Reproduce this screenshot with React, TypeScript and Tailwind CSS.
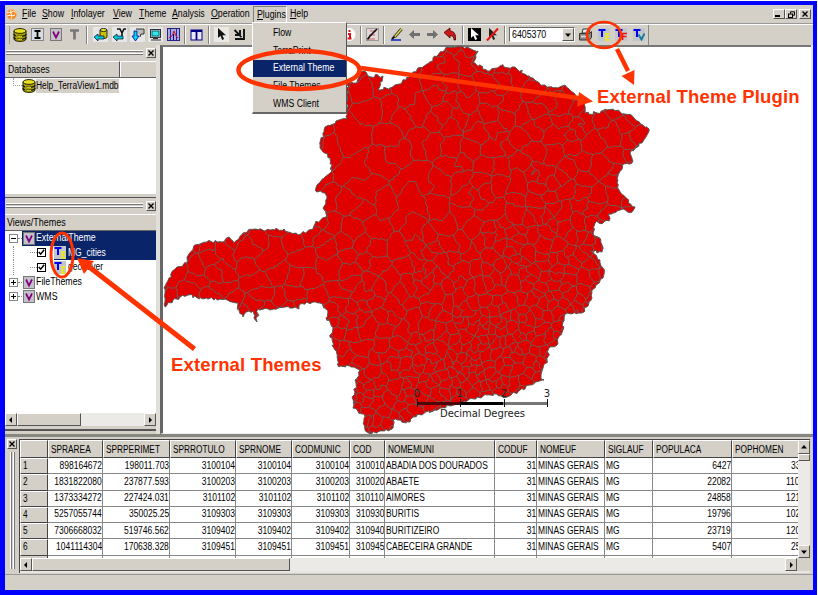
import React from "react";

type Pt = [number, number];

function makeRandom(seed: number) {
  let s = seed;
  return () => {
    s = (s * 1664525 + 1013904223) >>> 0;
    return s / 4294967296;
  };
}

const OUTLINE: Pt[] = [
  [165, 307], [164, 288], [169, 278], [177, 267], [187, 263], [187, 257], [195, 245], [208, 241], [222, 242], [229, 237],
  [234, 243], [243, 233], [255, 229], [270, 230], [284, 229], [298, 235], [310, 230], [315, 224], [326, 217], [323, 208],
  [327, 198], [325, 193], [317, 192], [317, 185], [332, 171], [330, 158], [320, 148], [325, 127], [336, 121], [347, 119],
  [347, 80], [357, 83], [360, 72], [366, 72], [368, 76], [383, 76], [378, 90], [390, 88], [400, 84], [413, 72], [429, 63], [433, 58],
  [448, 47], [460, 46], [478, 51], [473, 63], [490, 71], [500, 66], [515, 67], [527, 76], [545, 85], [558, 88],
  [565, 85], [578, 97], [584, 103], [585, 113], [597, 113], [605, 109], [620, 112], [633, 117], [649, 129], [642, 143],
  [630, 153], [632, 163], [622, 165], [618, 180], [619, 190], [635, 207], [632, 212], [620, 210], [608, 214], [609, 221],
  [595, 223], [593, 233], [598, 237], [602, 245], [602, 252], [590, 251], [600, 260], [603, 268], [603, 278], [592, 290],
  [592, 298], [582, 313], [567, 313], [563, 322], [563, 330], [557, 345], [550, 347], [547, 360], [543, 368], [541, 377],
  [544, 380], [530, 385], [507, 397], [497, 394], [477, 397], [457, 403], [435, 410], [413, 417], [410, 422], [393, 420],
  [393, 428], [377, 433], [367, 432], [363, 423], [365, 417], [353, 408], [352, 397], [355, 392], [355, 380], [360, 370],
  [350, 366], [339, 367], [335, 350], [330, 337], [333, 327], [326, 318], [328, 312], [320, 303], [313, 302], [300, 304],
  [299, 309], [293, 308], [285, 307], [270, 310], [258, 309], [257, 322], [254, 318], [253, 311], [249, 311], [243, 317],
  [239, 310], [238, 303], [225, 299], [203, 299], [188, 295], [180, 297],
];

// Distance between neighbouring municipalities: sparse in the northwest, dense in the southeast.
const SPACING: [number, number, number][] = [
  [190, 275, 19], [250, 260, 21], [300, 270, 19], [350, 140, 27], [350, 180, 27], [390, 185, 36], [440, 90, 19], [400, 120, 24], [425, 170, 25],
  [480, 140, 16], [550, 130, 15], [610, 140, 15], [580, 190, 15], [500, 210, 14], [370, 260, 17], [440, 260, 12],
  [520, 270, 8.5], [580, 270, 9.5], [540, 320, 7.6], [480, 330, 8], [420, 330, 11], [370, 320, 13], [390, 380, 9], [500, 370, 8.5], [370, 420, 8],
];

function spacing(x: number, y: number) {
  let a = 0;
  let b = 0;
  for (const [px, py, r] of SPACING) {
    const w = 1 / (((x - px) ** 2 + (y - py) ** 2 + 60) ** 1.5);
    a += w * r;
    b += w;
  }
  return a / b;
}

function rough(a: Pt, b: Pt, rnd: () => number, step: number, amp: number): Pt[] {
  const len = Math.hypot(b[0] - a[0], b[1] - a[1]);
  const n = Math.max(1, Math.round(len / step));
  const out: Pt[] = [];
  for (let i = 1; i < n; i++) {
    const t = i / n;
    out.push([a[0] + (b[0] - a[0]) * t + (rnd() - 0.5) * amp, a[1] + (b[1] - a[1]) * t + (rnd() - 0.5) * amp]);
  }
  out.push(b);
  return out;
}

const toPath = (pts: Pt[]) => pts.map((p) => p[0].toFixed(1) + " " + p[1].toFixed(1)).join("L");

type Site = { x: number; y: number; r: number; group: number };

function buildMap() {
  const rnd = makeRandom(77);
  const border: Pt[] = [OUTLINE[0]];
  OUTLINE.forEach((p, i) => border.push(...rough(p, OUTLINE[(i + 1) % OUTLINE.length], rnd, 2.5, 3)));
  const centres: [number, number, number][] = [];
  for (let k = 0; k < 14000; k++) {
    const x = 155 + rnd() * 505;
    const y = 38 + rnd() * 405;
    const r = spacing(x, y) * (0.55 + rnd() * 0.8);
    if (centres.every((s) => (s[0] - x) ** 2 + (s[1] - y) ** 2 > ((r + s[2]) / 2) ** 2)) centres.push([x, y, r]);
  }
  // Each municipality is a small cluster of cells, so that its shape is not convex.
  const sites: Site[] = [];
  centres.forEach(([x, y, r], group) => {
    sites.push({ x, y, r, group });
    for (let i = 0; i < 4; i++) {
      const a = rnd() * Math.PI * 2;
      const d = r * (0.25 + rnd() * 0.35);
      sites.push({ x: x + Math.cos(a) * d, y: y + Math.sin(a) * d, r, group });
    }
  });
  let cells = "";
  sites.forEach((s) => {
    const h = s.r * 1.4 + 6;
    type V = { p: Pt; g: number };
    let poly: V[] = [
      { p: [s.x - h, s.y - h], g: s.group },
      { p: [s.x + h, s.y - h], g: s.group },
      { p: [s.x + h, s.y + h], g: s.group },
      { p: [s.x - h, s.y + h], g: s.group },
    ];
    for (const o of sites) {
      const dx = o.x - s.x;
      const dy = o.y - s.y;
      if (o === s || dx * dx + dy * dy > h * h * 5) continue;
      const c = (o.x ** 2 + o.y ** 2 - s.x ** 2 - s.y ** 2) / 2;
      const next: V[] = [];
      for (let i = 0; i < poly.length; i++) {
        const a = poly[i];
        const b = poly[(i + 1) % poly.length];
        const da = a.p[0] * dx + a.p[1] * dy - c;
        const db = b.p[0] * dx + b.p[1] * dy - c;
        if (da <= 0) next.push(a);
        if (da * db < 0) {
          const t = da / (da - db);
          const m: Pt = [a.p[0] + (b.p[0] - a.p[0]) * t, a.p[1] + (b.p[1] - a.p[1]) * t];
          next.push({ p: m, g: da < 0 ? o.group : a.g });
        }
      }
      poly = next;
    }
    poly.forEach((v, i) => {
      if (v.g <= s.group) return;
      const q = poly[(i + 1) % poly.length].p;
      cells += "M" + toPath([v.p, ...rough(v.p, q, rnd, 2.5, 2)]);
    });
  });
  return { border: "M" + toPath(border) + "Z", cells };
}

const MAP = buildMap();

function Txt({ children, s = "scale-x-[.83]", o = "origin-left" }: { children: React.ReactNode; s?: string; o?: string }) {
  return <span className={"inline-block whitespace-pre " + o + " " + s}>{children}</span>;
}

const raised = "border border-t-white border-l-white border-r-[#555] border-b-[#555] bg-[#d4d0c8]";

function DbIcon() {
  return (
    <svg width="14" height="14" viewBox="0 0 14 14" className="shrink-0">
      <path d="M1 3v8c0 3.2 12 3.2 12 0V3z" fill="#a8a000" stroke="#222200" />
      <ellipse cx="7" cy="3" rx="6" ry="2.4" fill="#e8e020" stroke="#222200" />
      <path d="M1 6c0 3 12 3 12 0M1 9c0 3 12 3 12 0" fill="none" stroke="#111" strokeWidth="1.2" />
      <path d="M3 7.7c1.5.9 4 1 6 .8M3 10.7c1.5.9 4 1 6 .8" fill="none" stroke="#f4ee30" strokeWidth=".9" />
    </svg>
  );
}

function VIcon() {
  return (
    <svg width="12" height="13" viewBox="0 0 12 13" className="shrink-0">
      <rect x=".5" y=".5" width="11" height="12" fill="#c4c0c8" stroke="#777" />
      <path d="M3 3.5l3 6 3-6" fill="none" stroke="#800080" strokeWidth="1.7" />
    </svg>
  );
}

function TIcon({ kind }: { kind: "E" | "F" | "V" }) {
  return (
    <svg width="12" height="13" viewBox="0 0 12 13" className="shrink-0">
      <rect width="12" height="13" fill="#c3c5cc" />
      <path d="M.5 2h7M4 2v7" fill="none" stroke="#0000f0" strokeWidth="2" />
      {kind === "E" && <path d="M11.5 6H8v6h3.5M8 9h3" fill="none" stroke="#f2ee00" strokeWidth="1.4" />}
      {kind === "F" && <path d="M12 5.5H7.5V12M7.5 8.5h4" fill="none" stroke="#ee1111" strokeWidth="1.7" />}
      {kind === "V" && <path d="M5.5 6.5l3 5 3-6" fill="none" stroke="#167aa0" strokeWidth="1.9" />}
    </svg>
  );
}

const pointer = "M4 1v10l2.4-2.2L8.2 13l1.9-.9-1.8-3.8H12z";

function Glyph({ name }: { name: string }) {
  switch (name) {
    case "db":
      return <DbIcon />;
    case "V":
      return <VIcon />;
    case "E":
    case "F":
    case "W":
      return <TIcon kind={name === "W" ? "V" : (name as "E" | "F")} />;
  }
  return (
    <svg width="15" height="15" viewBox="0 0 15 15" className="shrink-0">
      {name === "I" && (
        <>
          <rect x="1.5" y="1.5" width="12" height="12" fill="#d8dce4" stroke="#888" />
          <path d="M4.5 4h6M4.5 11h6M7.5 4v7" stroke="#000" strokeWidth="1.8" />
        </>
      )}
      {name === "T" && <path d="M3 3.5h9M7.5 3v9.500" stroke="#777" strokeWidth="2.7" />}
      {name === "dbarrow" && (
        <>
          <rect width="15" height="15" fill="#e6e6e8" />
          <path d="M7 3v7c0 2 7 2 7 0V3z" fill="#c8c000" stroke="#222" />
          <ellipse cx="10.5" cy="3" rx="3.5" ry="1.5" fill="#f4ee30" stroke="#222" />
          <path d="M1 10l4-3v2h6v3H5v2z" fill="#00c8d8" stroke="#123" strokeWidth=".8" />
        </>
      )}
      {name === "varrow" && (
        <>
          <rect width="15" height="15" fill="#e6e6e8" />
          <path d="M5 2h3l2 4 2-4h2M10 6v4" fill="none" stroke="#111" strokeWidth="1.6" />
          <path d="M1 10l4-3v2h6v3H5v2z" fill="#00c8d8" stroke="#123" strokeWidth=".8" />
        </>
      )}
      {name === "down" && (
        <>
          <rect width="15" height="15" fill="#e6e6e8" />
          <path d="M6 2h8v5h-3l-1 3" fill="#bbb" stroke="#333" />
          <path d="M4 4h3v5h2l-3.5 5L2 9h2z" fill="#00d8e8" stroke="#0000a0" strokeWidth=".8" />
        </>
      )}
      {name === "screen" && (
        <>
          <rect width="15" height="15" fill="#e6e6e8" />
          <rect x="2.5" y="2.5" width="10" height="8" fill="#d8d8d8" stroke="#333" />
          <rect x="4" y="4" width="7" height="5" fill="#30e8e8" stroke="#067" />
          <path d="M3 13h10M5 11.5h5" stroke="#333" />
        </>
      )}
      {name === "chart" && (
        <>
          <rect x="1.5" y="1.5" width="12" height="12" fill="#a8aadc" stroke="#222288" />
          <path d="M4.5 2v11M10.5 2v11" stroke="#2222c0" />
          <path d="M3 11l3-2 2-5 2 5 2 2" fill="none" stroke="#d01020" />
          <path d="M7.5 7v6" stroke="#0000a0" />
        </>
      )}
      {name === "table" && (
        <>
          <rect x="2" y="3" width="11" height="10" fill="#e8e8f8" stroke="#000080" />
          <path d="M2 4h11M7.5 4v9" stroke="#000080" strokeWidth="1.8" />
        </>
      )}
      {name === "pointer" && (
        <>
          <rect width="15" height="15" fill="#e9e8e5" />
          <path d={pointer} fill="#111" />
        </>
      )}
      {name === "se" && <path d="M2.5 3l7 7M12 2v10H3M8 3v5H3" fill="none" stroke="#111" strokeWidth="1.9" />}
      {name === "info" && (
        <>
          <circle cx="6" cy="7.5" r="6.5" fill="#fff" />
          <path d="M6.5 3v2M5 7h2v4.500M4.500 11.500h4" stroke="#e01010" strokeWidth="2" fill="none" />
        </>
      )}
      {name === "page" && (
        <>
          <rect x="1.5" y="1.5" width="12" height="12" fill="#e0d8d8" stroke="#999" />
          <path d="M5 4h6M4 8h6M4 12h6" stroke="#d06060" />
          <path d="M12 2L5 9l-2.500 3.500" stroke="#111" strokeWidth="1.7" fill="none" />
        </>
      )}
      {name === "pencil" && (
        <>
          <path d="M2 13h10" stroke="#1030c0" strokeWidth="1.6" />
          <path d="M12.5 2L5.5 10" stroke="#333" strokeWidth="3.2" />
          <path d="M12.5 2L5.5 10" stroke="#e8e040" strokeWidth="1.4" />
          <path d="M5.5 9.5L3 12" stroke="#111" strokeWidth="2" />
        </>
      )}
      {name === "left" && <path d="M2 7.5l5-4.500v3h6v3H7v3z" fill="#707070" />}
      {name === "right" && <path d="M13 7.5L8 3v3H2v3h6v3z" fill="#707070" />}
      {name === "undo" && <path d="M1 5.5L7 1v3c4 0 6 3 5.500 9L11 13c0-3-1-4.500-4-4.500V11z" fill="#d01818" stroke="#400" strokeWidth=".8" />}
      {name === "black" && (
        <>
          <rect x="1" y="1" width="13" height="13" fill="#000" />
          <path d={pointer} fill="#fff" />
        </>
      )}
      {name === "nopointer" && (
        <>
          <path d={pointer} fill="#222" />
          <path d="M2 13.5L13 1.5" stroke="#f01010" strokeWidth="2" />
        </>
      )}
      {name === "printer" && (
        <>
          <path d="M4 6l1-4h7l-1 4z" fill="#eee" stroke="#333" />
          <path d="M1.5 6.5h10l2-2v6l-2 2.500h-10z" fill="#888" stroke="#333" />
          <path d="M3 9.5h7" stroke="#ddd" strokeWidth="1.5" />
        </>
      )}
    </svg>
  );
}

const TOOLS: [string, string][] = [
  ["db", "w-[18px]"], ["I", "w-[17px]"], ["V", "w-[19px]"], ["T", "w-[18px]"], ["|", "w-[8px]"],
  ["dbarrow", "w-[18px]"], ["varrow", "w-[20px]"], ["down", "w-[17px]"], ["screen", "w-[18px]"], ["chart", "w-[18px]"], ["|", "w-[5px]"],
  ["table", "w-[18px]"], ["|", "w-[7px]"], ["pointer", "w-[18px]"], ["se", "w-[18px]"], ["", "w-[93px]"],
  ["info", "w-[18px]"], ["|", "w-[4px]"], ["page", "w-[18px]"], ["|", "w-[6px]"], ["pencil", "w-[18px]"], ["left", "w-[19px]"],
  ["right", "w-[17px]"], ["undo", "w-[19px]"], ["|", "w-[5px]"], ["black", "w-[18px]"], ["nopointer", "w-[18px]"], ["|", "w-[8px]"],
];

function Tool({ name, w }: { name: string; w: string }) {
  return (
    <div className={"flex h-[18px] shrink-0 items-center justify-center " + w}>
      {name === "|" ? <div className="h-[18px] w-[2px] border-l border-r border-l-[#808080] border-r-white" /> : name && <Glyph name={name} />}
    </div>
  );
}

function Arrow({ dir }: { dir: "l" | "r" | "u" | "d" }) {
  const d = { l: "M5 1v6L2 4z", r: "M3 1v6l3-3z", u: "M1 5.5h6L4 2z", d: "M1 2.5h6L4 6z" }[dir];
  return (
    <svg width="8" height="8" viewBox="0 0 8 8">
      <path d={d} fill="#000" />
    </svg>
  );
}

function Cross() {
  return (
    <svg width="6" height="6" viewBox="0 0 6 6">
      <path d="M.5.5l5 5M5.5.5l-5 5" stroke="#000" strokeWidth="1.4" />
    </svg>
  );
}

function Handle({ h }: { h: string }) {
  return (
    <div className={"flex shrink-0 items-center pl-px " + h}>
      <div className="flex flex-1 flex-col gap-px">
        <div className="h-[2px] border-t border-b border-t-white border-b-[#777]" />
        <div className="h-[2px] border-t border-b border-t-white border-b-[#777]" />
      </div>
      <div className={"ml-[3px] flex h-[10px] w-[10px] items-center justify-center " + raised}>
        <Cross />
      </div>
    </div>
  );
}

const MENUS: [string, string, string][] = [
  ["F", "ile", "w-[20px]"], ["S", "how", "w-[29px]"], ["I", "nfolayer", "w-[42px]"], ["V", "iew", "w-[26px]"], ["T", "heme", "w-[33px]"],
  ["A", "nalysis", "w-[39px]"], ["O", "peration", "w-[45px]"], ["P", "lugins", "w-[34px]"], ["H", "elp", "w-[20px]"],
];

const COLS: { name: string; w: string; right: boolean }[] = [
  { name: "SPRAREA", w: "w-[55px]", right: true },
  { name: "SPRPERIMET", w: "w-[67px]", right: true },
  { name: "SPRROTULO", w: "w-[66px]", right: true },
  { name: "SPRNOME", w: "w-[56px]", right: true },
  { name: "CODMUNIC", w: "w-[58px]", right: true },
  { name: "COD", w: "w-[35px]", right: true },
  { name: "NOMEMUNI", w: "w-[110px]", right: false },
  { name: "CODUF", w: "w-[42px]", right: true },
  { name: "NOMEUF", w: "w-[68px]", right: false },
  { name: "SIGLAUF", w: "w-[48px]", right: false },
  { name: "POPULACA", w: "w-[79px]", right: true },
];

const ROWS = [
  ["898164672", "198011.703", "3100104", "3100104", "3100104", "310010", "ABADIA DOS DOURADOS", "31", "MINAS GERAIS", "MG", "6427", "33"],
  ["1831822080", "237877.593", "3100203", "3100203", "3100203", "310020", "ABAETE", "31", "MINAS GERAIS", "MG", "22082", "110"],
  ["1373334272", "227424.031", "3101102", "3101102", "3101102", "310110", "AIMORES", "31", "MINAS GERAIS", "MG", "24858", "121"],
  ["5257055744", "350025.25", "3109303", "3109303", "3109303", "310930", "BURITIS", "31", "MINAS GERAIS", "MG", "19796", "102"],
  ["7306668032", "519746.562", "3109402", "3109402", "3109402", "310940", "BURITIZEIRO", "31", "MINAS GERAIS", "MG", "23719", "120"],
  ["1041114304", "170638.328", "3109451", "3109451", "3109451", "310945", "CABECEIRA GRANDE", "31", "MINAS GERAIS", "MG", "5407", "25"],
];

const headCell = "h-full shrink-0 border-r border-b border-r-[#444] border-b-[#444] border-t border-t-white border-l border-l-white bg-[#d4d0c8] flex items-center overflow-hidden";
const cell = "h-full shrink-0 border-r border-b border-[#888] flex items-center overflow-hidden";

function Table() {
  return (
    <div className="flex h-[134px] w-[791px] flex-col border-l border-t border-[#444] bg-white">
      <div className="flex h-[118px]">
        <div className="w-[778px] overflow-hidden">
          <div className="flex h-[18px] w-[860px]">
            <div className={headCell + " w-[28px]"} />
            {COLS.map((c) => (
              <div key={c.name} className={headCell + " pl-[2px] pt-px " + c.w}>
                <Txt>{c.name}</Txt>
              </div>
            ))}
            <div className={headCell + " w-[80px] pl-[2px] pt-px"}>
              <Txt>POPHOMEN</Txt>
            </div>
          </div>
          {ROWS.map((r, i) => (
            <div key={i} className="flex h-[16.25px] w-[860px]">
              <div className={headCell + " w-[28px] pl-[2px]"}>
                <Txt>{i + 1}</Txt>
              </div>
              {COLS.map((c, j) => (
                <div key={c.name} className={cell + " " + c.w + (c.right ? " justify-end" : " pl-px")}>
                  <Txt s={c.right ? "scale-x-[.85]" : "scale-x-[.84]"} o={c.right ? "origin-right" : "origin-left"}>{r[j]}</Txt>
                </div>
              ))}
              <div className={cell + " w-[80px]" + (r[11].length === 3 ? " pl-[54px]" : " pl-[59px]")}>
                <Txt s="scale-x-[.85]">{r[11]}</Txt>
              </div>
            </div>
          ))}
          <div className="flex h-[4px]">
            <div className="w-[28px] shrink-0 border-r border-[#444] bg-[#d4d0c8]" />
            {COLS.map((c) => (
              <div key={c.name} className={"shrink-0 border-r border-[#888] " + c.w} />
            ))}
          </div>
        </div>
        <div className="flex w-[12px] flex-col bg-[#ebeae7]">
          <div className={"flex h-[14px] items-center justify-center " + raised}><Arrow dir="u" /></div>
          <div className={"h-[7px] " + raised} />
          <div className="flex-1" />
          <div className={"flex h-[13px] items-center justify-center " + raised}><Arrow dir="d" /></div>
        </div>
      </div>
      <div className="flex h-[13px] bg-[#ebeae7]">
        <div className={"flex w-[12px] items-center justify-center " + raised}><Arrow dir="l" /></div>
        <div className={"w-[258px] " + raised} />
        <div className="flex-1" />
        <div className={"flex w-[12px] items-center justify-center " + raised}><Arrow dir="r" /></div>
        <div className="w-[13px] bg-[#d4d0c8]" />
      </div>
      <div className="h-[2px] bg-[#e8e6e0]" />
    </div>
  );
}

function Check() {
  return (
    <div className="flex h-[9px] w-[9px] shrink-0 items-center justify-center border border-black bg-white">
      <svg width="7" height="7" viewBox="0 0 7 7">
        <path d="M.8 3l1.9 2.200L6.200.8" fill="none" stroke="#000" strokeWidth="1.5" />
      </svg>
    </div>
  );
}

function Plus({ open }: { open?: boolean }) {
  return (
    <svg width="9" height="9" viewBox="0 0 9 9" className="shrink-0">
      <rect x=".5" y=".5" width="8" height="8" fill="#fff" stroke="#888" />
      <path d={open ? "M2 4.5h5" : "M2 4.5h5M4.5 2v5"} stroke="#000" />
    </svg>
  );
}

function ViewRow({ name, open, dark }: { name: string; open?: boolean; dark?: boolean }) {
  return (
    <div className="flex h-[14.6px] shrink-0 items-center">
      <div className="flex w-[17px] items-center pl-[4px]">
        <Plus open={open} />
        <div className="w-[4px] border-t border-dotted border-[#888]" />
      </div>
      <div className={"flex h-full flex-1 items-center gap-px pl-px " + (dark ? "bg-[#0a246a] text-white" : "")}>
        <VIcon />
        <Txt s="scale-x-[.88]">{name}</Txt>
      </div>
    </div>
  );
}

function ThemeRow({ name, dark }: { name: string; dark?: boolean }) {
  return (
    <div className="flex h-[14.6px] shrink-0 items-center">
      <div className="ml-[8px] h-full w-[9px] border-l border-dotted border-[#888]" />
      <div className={"flex h-full flex-1 items-center " + (dark ? "bg-[#0a246a] text-white" : "")}>
        <div className="flex h-full w-[32px] items-center bg-white pl-[8px]">
          <div className="w-[7px] border-t border-dotted border-[#888]" />
          <Check />
        </div>
        <TIcon kind="E" />
        <div className="pl-[2px]"><Txt s="scale-x-[.85]">{name}</Txt></div>
      </div>
    </div>
  );
}

export default function App() {
  return (
    <div className="relative h-[595px] w-[818px] overflow-hidden bg-white pt-px pr-px font-['Liberation_Sans',Arial,sans-serif] text-[10px] leading-[12px] text-black">
      <div className="flex h-[594px] w-[817px] flex-col border-t-4 border-r-4 border-b-[5px] border-l-[5px] border-[#0000ff] bg-[#d4d0c8]">
        <div className="flex h-[19px] items-center border-b border-[#999] pl-[1px]">
          <svg width="11" height="11" viewBox="0 0 11 11" className="mr-[5px]">
            <circle cx="5.5" cy="5.5" r="5" fill="#f68a1e" />
            <path d="M1 4c2-2 3 1 5-1s3 0 4 1M1 7c3-2 4 1 8-1M5 1c-1 4 2 5 0 9" fill="none" stroke="#fff" strokeWidth="1" />
          </svg>
          {MENUS.map(([a, b, w]) => (
            <div
              key={b}
              className={"flex h-[16px] shrink-0 items-center " + w + (a === "P" ? " -ml-[3px] mr-[3px] border border-b-0 border-t-[#808080] border-l-[#808080] border-r-white pl-[3px]" : "")}
            >
              <Txt s="scale-x-[.88]"><span className="underline underline-offset-1">{a}</span>{b}</Txt>
            </div>
          ))}
          <div className="ml-auto flex pr-[2px]">
            <div className={"flex h-[10px] w-[12px] items-end justify-center " + raised}>
              <div className="mb-px mr-1 h-[2px] w-[5px] bg-black" />
            </div>
            <div className={"flex h-[10px] w-[12px] items-center justify-center " + raised}>
              <svg width="7" height="7" viewBox="0 0 7 7">
                <path d="M2.5 2.5V.8h4v3.400H5" fill="none" stroke="#000" />
                <rect x=".5" y="3" width="4" height="3.5" fill="#d4d0c8" stroke="#000" />
              </svg>
            </div>
            <div className={"ml-[2px] flex h-[10px] w-[12px] items-center justify-center " + raised}><Cross /></div>
          </div>
        </div>
        <div className="flex h-[21px] items-center border-t border-white pb-px">
          <div className="h-[18px] w-[5px] shrink-0 border-r border-[#999]" />
          <div className="w-px shrink-0" />
          {TOOLS.map(([n, w], i) => <Tool key={i} name={n} w={w} />)}
          <div className="flex h-[15px] w-[66px] shrink-0 border border-t-[#666] border-l-[#666] border-r-white border-b-white bg-white">
            <div className="flex flex-1 items-center pl-[2px]"><Txt s="scale-x-[.88]">6405370</Txt></div>
            <div className={"flex w-[12px] items-center justify-center " + raised}><Arrow dir="d" /></div>
          </div>
          <Tool name="printer" w="w-[20px]" />
          <Tool name="E" w="w-[17px]" />
          <Tool name="F" w="w-[18px]" />
          <Tool name="W" w="w-[18px]" />
          <div className="h-[20px] w-px bg-[#888]" />
        </div>
        <div className="flex h-[389px] shrink-0">
          <div className="flex w-[155px] shrink-0 flex-col border-r-[4px] border-r-[#e1dfd9]">
            <Handle h="h-[15px]" />
            <div className="mt-px flex h-[17px] shrink-0 border-b border-b-[#666]">
              <div className="flex w-[115px] items-center border-r border-t border-r-[#555] border-t-white pl-[3px]"><Txt s="scale-x-[.87]">Databases</Txt></div>
              <div className="flex-1 border-l border-t border-white" />
            </div>
            <div className="flex h-[116px] shrink-0 flex-col bg-white">
              <div className="flex h-[15px] items-center pl-[8px]">
                <div className="h-[8px] w-[9px] -translate-y-1 border-b border-l border-dotted border-[#999]" />
                <DbIcon />
                <div className="flex h-[14px] w-[83px] items-center bg-[#d4d0c8]"><Txt s="scale-x-[.84]">Help_TerraView1.mdb</Txt></div>
              </div>
            </div>
            <div className="h-[4px] shrink-0 border-b border-[#555]" />
            <Handle h="h-[15px]" />
            <div className="mt-px flex h-[17px] shrink-0 items-center border-b border-t border-b-[#666] border-t-white pl-[2px]"><Txt s="scale-x-[.9]">Views/Themes</Txt></div>
            <div className="flex h-[182px] shrink-0 flex-col bg-white">
              <ViewRow name="ExternalTheme" open dark />
              <ThemeRow name="MG_cities" dark />
              <ThemeRow name="geocover" />
              <ViewRow name="FileThemes" />
              <ViewRow name="WMS" />
            </div>
            <div className="flex h-[13px] shrink-0 bg-[#ebeae7]">
              <div className={"flex w-[12px] items-center justify-center " + raised}><Arrow dir="l" /></div>
              <div className={"w-[64px] " + raised} />
              <div className="flex-1" />
              <div className={"flex w-[12px] items-center justify-center " + raised}><Arrow dir="r" /></div>
            </div>
            <div className="h-[5px] shrink-0 border-b-2 border-[#555]" />
          </div>
          <div className="flex-1 border-b border-l-[3px] border-t-2 border-b-[#eee] border-l-[#666] border-t-[#777] bg-white" />
          <div className="w-[2px] bg-[#e6e4de]" />
        </div>
        <div className="flex h-[140px] shrink-0 border-t-[3px] border-[#858780] pt-[2px]">
          <div className="flex w-[14px] shrink-0 flex-col items-center">
            <div className={"flex h-[10px] w-[10px] shrink-0 items-center justify-center " + raised}><Cross /></div>
            <div className="mt-[3px] flex h-[117px] gap-px">
              <div className="w-[2px] border-l border-r border-l-white border-r-[#777]" />
              <div className="w-[2px] border-l border-r border-l-white border-r-[#777]" />
            </div>
          </div>
          <Table />
        </div>
        <div className="flex-1 border-t border-[#999]" />
      </div>

      <svg className="absolute left-0 top-0" width="818" height="595" viewBox="0 0 818 595">
        <defs>
          <clipPath id="state"><path d={MAP.border} /></clipPath>
        </defs>
        <path d={MAP.border} fill="#e00000" stroke="#555" strokeWidth="1" />
        <path d={MAP.cells} clipPath="url(#state)" fill="none" stroke="#6a6058" strokeWidth=".95" />
        <path d="M417.5 403.5h43" stroke="#4a0808" strokeWidth="3" />
        <path d="M460.5 403.5h43" stroke="#000" strokeWidth="3" />
        <path d="M503.5 403.5h44" stroke="#777" strokeWidth="3" />
        <path d="M417.5 399v8M460.5 399v8M504.5 399v8M547.5 399v8" stroke="#111" />
        <g className="font-['DejaVu_Sans',sans-serif] text-[10px]" fill="#222" textAnchor="middle">
          <text x="417" y="396.5">0</text>
          <text x="460" y="396.5">1</text>
          <text x="504" y="396.5">2</text>
          <text x="547" y="396.5">3</text>
          <text x="482.5" y="417" textLength="85">Decimal Degrees</text>
        </g>
      </svg>

      <div className="absolute left-[252px] top-[22px] flex h-[92px] w-[95px] flex-col border border-b-2 border-l-white border-t-white border-r-[#555] border-b-[#666] bg-[#d4d0c8] pt-px">
        {["Flow", "TerraPrint", "External Theme", "File Themes", "WMS Client"].map((m) => (
          <div key={m} className={"flex h-[17.8px] shrink-0 items-center pl-[20px] " + (m === "External Theme" ? "bg-[#0a246a] text-white" : "")}>
            <Txt s="scale-x-[.87]">{m}</Txt>
          </div>
        ))}
      </div>

      <svg className="absolute left-0 top-0" width="818" height="595" viewBox="0 0 818 595" fill="none" stroke="#ff3300">
        <ellipse cx="299" cy="70" rx="60.5" ry="19" strokeWidth="4.5" />
        <ellipse cx="604" cy="35" rx="17" ry="13" strokeWidth="2.7" />
        <ellipse cx="62" cy="255" rx="11" ry="22" strokeWidth="3" />
        <path d="M361 68L582 98.5" strokeWidth="4.5" />
        <path d="M617 49L628 71" strokeWidth="4.5" />
        <path d="M194.5 349L88 266" strokeWidth="5" />
        <g fill="#ff3300" stroke="none">
          <path d="M593 101.5L577 106.500L579 92Z" />
          <path d="M634 85L621.5 76L634.500 70Z" />
          <path d="M77 258L94 261L84 274Z" />
        </g>
      </svg>
      <div className="absolute left-[597px] top-[86px] whitespace-nowrap text-[18.5px] font-bold leading-[22px] tracking-[.16px] text-[#ff3300]">External Theme Plugin</div>
      <div className="absolute left-[171px] top-[354px] whitespace-nowrap text-[18.5px] font-bold leading-[22px] tracking-[.17px] text-[#ff3300]">External Themes</div>
    </div>
  );
}
